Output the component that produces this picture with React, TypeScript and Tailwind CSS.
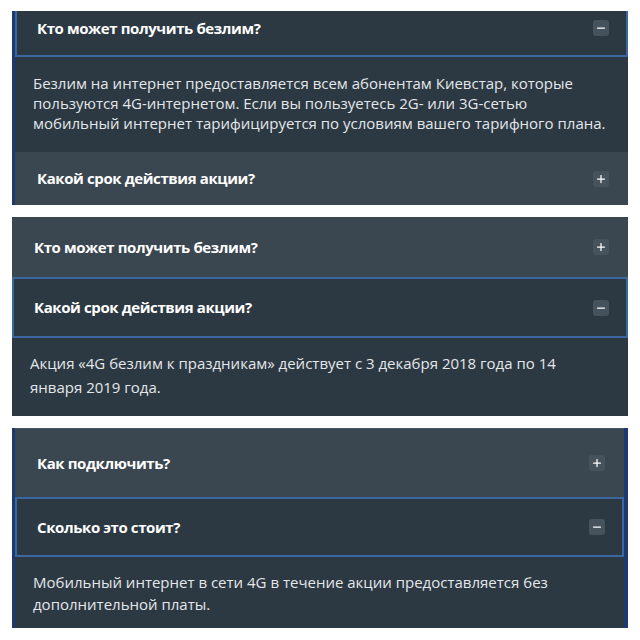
import { Plus, Minus } from 'lucide-react'

type Item = {
  q: string
  a?: string[]
  open?: boolean
  h: string
  bodyH?: string
  noTop?: boolean
  topLine?: boolean
  pad?: string
}

function Toggle({ open }: { open?: boolean }) {
  return (
    <span className="flex h-4 w-4 items-center justify-center rounded-[3px] bg-[#46525c] text-white">
      {open ? <Minus size={12} strokeWidth={2.5} /> : <Plus size={12} strokeWidth={2.5} />}
    </span>
  )
}

function Row({ item }: { item: Item }) {
  const title = <span className="text-[15px] font-bold tracking-[-0.4px] text-white">{item.q}</span>
  if (!item.open) {
    return (
      <div
        className={`flex items-center justify-between bg-[#3a4650] pl-[22px] pr-[19px] ${item.h} ${
          item.topLine ? 'border-t border-[#4a5660]' : ''
        }`}
      >
        {title}
        <Toggle />
      </div>
    )
  }
  return (
    <>
      <div
        className={`flex items-center justify-between border-2 border-[#3c66a2] bg-[#2c3943] pl-5 pr-[17px] ${item.h} ${
          item.noTop ? 'border-t-0 pb-[10px]' : ''
        }`}
      >
        {title}
        <Toggle open />
      </div>
      <div
        className={`flex flex-col justify-center bg-[#2c3943] pl-[18px] pr-4 text-[15px] text-[#e4e7ea] ${item.bodyH} ${
          item.pad ?? ''
        }`}
      >
        {item.a?.map((l) => (
          <p key={l}>{l}</p>
        ))}
      </div>
    </>
  )
}

const panels: { items: Item[]; cls: string }[] = [
  {
    cls: 'border-l-[3px] border-[#1d3a6e]',
    items: [
      {
        q: 'Кто может получить безлим?',
        open: true,
        noTop: true,
        h: 'h-[46px]',
        bodyH: 'h-[95px] leading-[20px] pb-1',
        a: [
          'Безлим на интернет предоставляется всем абонентам Киевстар, которые',
          'пользуются 4G-интернетом. Если вы пользуетесь 2G- или 3G-сетью',
          'мобильный интернет тарифицируется по условиям вашего тарифного плана.',
        ],
      },
      { q: 'Какой срок действия акции?', h: 'h-[53px]' },
    ],
  },
  {
    cls: 'pl-0',
    items: [
      { q: 'Кто может получить безлим?', h: 'h-[60px]' },
      {
        q: 'Какой срок действия акции?',
        open: true,
        h: 'h-[61px]',
        bodyH: 'h-[78px] leading-[24px] pb-1',
        a: ['Акция «4G безлим к праздникам» действует с 3 декабря 2018 года по 14', 'января 2019 года.'],
      },
    ],
  },
  {
    cls: 'border-l-[3px] border-r-4 border-[#1d3a6e]',
    items: [
      { q: 'Как подключить?', h: 'h-[69px]', topLine: true },
      {
        q: 'Сколько это стоит?',
        open: true,
        h: 'h-[60px]',
        bodyH: 'h-[71px] leading-[22px]',
        a: ['Мобильный интернет в сети 4G в течение акции предоставляется без', 'дополнительной платы.'],
      },
    ],
  },
]

export default function App() {
  return (
    <div className="flex h-[640px] w-[640px] flex-col gap-3 bg-white pl-3 pr-3 pt-[11px] font-['Open_Sans',sans-serif]">
      {panels.map((p, i) => (
        <div key={i} className={`flex flex-col overflow-hidden bg-[#2c3943] ${p.cls}`}>
          {p.items.map((it) => (
            <Row key={it.q} item={it} />
          ))}
        </div>
      ))}
    </div>
  )
}
